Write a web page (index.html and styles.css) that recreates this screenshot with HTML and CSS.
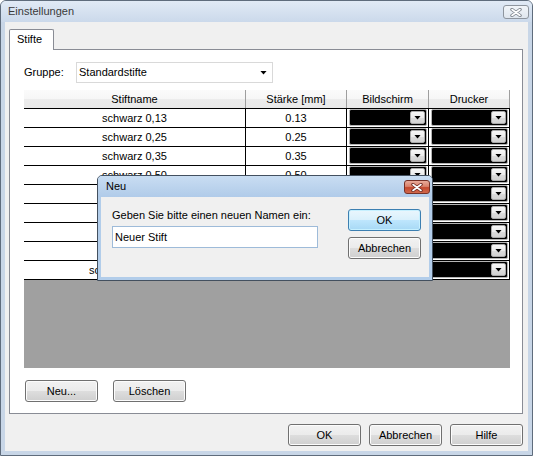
FILE: index.html
```html
<!DOCTYPE html>
<html lang="de">
<head>
<meta charset="utf-8">
<title>Einstellungen</title>
<link rel="stylesheet" href="styles.css">
</head>
<body>
<div class="window">
  <div class="titlebar">
    <span class="title">Einstellungen</span>
    <span class="close close-inactive">
      <svg width="12" height="9" viewBox="0 0 12 9"><path d="M2 1.5l8 6M10 1.5l-8 6" stroke="#7d848d" stroke-width="3.4" stroke-linecap="round"/><path d="M2 1.5l8 6M10 1.5l-8 6" stroke="#fff" stroke-width="1.6" stroke-linecap="round"/></svg>
    </span>
  </div>
  <div class="client">
    <div class="tabs">
      <div class="tabstrip"><div class="tab">Stifte</div></div>
      <div class="panel">
        <div class="group-row">
          <span class="label">Gruppe:</span>
          <div class="combo"><span>Standardstifte</span><span class="tri"></span></div>
        </div>
        <div class="grid">
          <div class="row head">
            <div class="cell c1">Stiftname</div>
            <div class="cell c2">Stärke [mm]</div>
            <div class="cell c3">Bildschirm</div>
            <div class="cell c4">Drucker</div>
          </div>
          <div class="row"><div class="cell c1">schwarz 0,13</div><div class="cell c2">0.13</div><div class="cell c3 cc"><div class="cbox"><span class="dd"></span></div></div><div class="cell c4 cc"><div class="cbox"><span class="dd"></span></div></div></div>
          <div class="row"><div class="cell c1">schwarz 0,25</div><div class="cell c2">0.25</div><div class="cell c3 cc"><div class="cbox"><span class="dd"></span></div></div><div class="cell c4 cc"><div class="cbox"><span class="dd"></span></div></div></div>
          <div class="row"><div class="cell c1">schwarz 0,35</div><div class="cell c2">0.35</div><div class="cell c3 cc"><div class="cbox"><span class="dd"></span></div></div><div class="cell c4 cc"><div class="cbox"><span class="dd"></span></div></div></div>
          <div class="row"><div class="cell c1">schwarz 0,50</div><div class="cell c2">0.50</div><div class="cell c3 cc"><div class="cbox"><span class="dd"></span></div></div><div class="cell c4 cc"><div class="cbox"><span class="dd"></span></div></div></div>
          <div class="row"><div class="cell c1"></div><div class="cell c2"></div><div class="cell c3 cc"><div class="cbox"><span class="dd"></span></div></div><div class="cell c4 cc"><div class="cbox"><span class="dd"></span></div></div></div>
          <div class="row"><div class="cell c1"></div><div class="cell c2"></div><div class="cell c3 cc"><div class="cbox"><span class="dd"></span></div></div><div class="cell c4 cc"><div class="cbox"><span class="dd"></span></div></div></div>
          <div class="row"><div class="cell c1"></div><div class="cell c2"></div><div class="cell c3 cc"><div class="cbox"><span class="dd"></span></div></div><div class="cell c4 cc"><div class="cbox"><span class="dd"></span></div></div></div>
          <div class="row"><div class="cell c1"></div><div class="cell c2"></div><div class="cell c3 cc"><div class="cbox"><span class="dd"></span></div></div><div class="cell c4 cc"><div class="cbox"><span class="dd"></span></div></div></div>
          <div class="row"><div class="cell c1 left9">sc</div><div class="cell c2"></div><div class="cell c3 cc"><div class="cbox"><span class="dd"></span></div></div><div class="cell c4 cc"><div class="cbox"><span class="dd"></span></div></div></div>
        </div>
        <div class="panel-buttons">
          <button class="btn">Neu...</button>
          <button class="btn">Löschen</button>
        </div>
      </div>
    </div>
    <div class="dlg-buttons">
      <button class="btn">OK</button>
      <button class="btn">Abbrechen</button>
      <button class="btn">Hilfe</button>
    </div>
  </div>

  <div class="dialog">
    <div class="dlg-title">
      <span class="title">Neu</span>
      <span class="close close-red">
        <svg width="12" height="9" viewBox="0 0 12 9"><path d="M2 1.5l8 6M10 1.5l-8 6" stroke="#6e2a22" stroke-width="3.4" stroke-linecap="round"/><path d="M2 1.5l8 6M10 1.5l-8 6" stroke="#fff" stroke-width="1.6" stroke-linecap="round"/></svg>
      </span>
    </div>
    <div class="dlg-body">
      <div class="dlg-left">
        <div class="prompt">Geben Sie bitte einen neuen Namen ein:</div>
        <div class="input">Neuer Stift</div>
      </div>
      <div class="dlg-right">
        <button class="btn default">OK</button>
        <button class="btn">Abbrechen</button>
      </div>
    </div>
  </div>
</div>
</body>
</html>
```

FILE: styles.css
```css
* { box-sizing: border-box; }
html, body { margin: 0; padding: 0; }
body {
  width: 533px;
  height: 456px;
  overflow: hidden;
  font: 11px/13px "Liberation Sans", Arial, sans-serif;
  color: #000;
  background: #fff;
}

.window {
  position: relative;
  width: 533px;
  height: 456px;
  border: 1px solid #5f6c7c;
  border-radius: 6px 6px 0 0;
  background: #c8d6e7;
  display: flex;
  flex-direction: column;
}

.titlebar {
  height: 21px;
  flex: none;
  display: flex;
  justify-content: space-between;
  align-items: flex-start;
  padding-left: 7px;
  background: linear-gradient(#e1eaf5, #cbd9eb);
  border-radius: 5px 5px 0 0;
}
.titlebar .title {
  line-height: 21px;
  color: #3a3a3a;
}

.close {
  width: 26px;
  height: 14px;
  margin: 4px 3px 0 0;
  border-radius: 3px;
  display: flex;
  align-items: center;
  justify-content: center;
}
.close-inactive {
  border: 1px solid #8e959e;
  background: linear-gradient(#f1f5f9, #dfe6ee);
}
.close-red {
  margin-right: 2px;
  border: 1px solid #763127;
  background: linear-gradient(#e9ab9a 0%, #d9826c 45%, #c4492f 55%, #d0674b 100%);
}

.client {
  flex: 1;
  margin: 0 4px 4px 4px;
  background: #f0f0f0;
  padding: 7px 5px 5px 4px;
  display: flex;
  flex-direction: column;
}

.tabstrip {
  height: 20px;
  display: flex;
  position: relative;
  z-index: 1;
}
.tab {
  width: 45px;
  height: 21px;
  border: 1px solid #898c95;
  border-bottom: none;
  border-radius: 2px 2px 0 0;
  background: #fff;
  padding: 3px 0 0 7px;
}

.panel {
  height: 365px;
  border: 1px solid #898c95;
  background: #fff;
  padding: 12px 12px 11px 14px;
  display: flex;
  flex-direction: column;
}

.group-row {
  height: 21px;
  display: flex;
  align-items: center;
}
.label { width: 52px; }
.combo {
  width: 197px;
  height: 21px;
  border: 1px solid #d9d9d9;
  display: flex;
  align-items: center;
  justify-content: space-between;
  padding: 0 5px 0 2px;
}
.tri {
  width: 7px;
  height: 4px;
  background: #000;
  clip-path: polygon(0 0, 100% 0, 50% 100%);
}

.grid {
  margin-top: 7px;
  width: 486px;
  height: 278px;
  background: #a0a0a0;
  display: flex;
  flex-direction: column;
}
.row {
  display: flex;
  height: 19px;
  flex: none;
  border-bottom: 1px solid #000;
  background: #fff;
}
.cell {
  border-right: 1px solid #000;
  display: flex;
  align-items: center;
  justify-content: center;
  white-space: nowrap;
  overflow: hidden;
}
.c1 { width: 222px; }
.c2 { width: 101px; }
.c3 { width: 82px; }
.c4 { width: 81px; }
.left9 {
  justify-content: flex-start;
  padding-left: 65px;
}

.head { background: linear-gradient(#fbfbfb 0%, #f6f6f6 50%, #ececec 51%, #e9e9e9 100%); }
.head .cell { border-right-color: #9e9e9e; }

.cc {
  align-items: flex-start;
  justify-content: stretch;
  padding: 0 1px 0 2px;
}
.cbox {
  width: 100%;
  height: 17px;
  border: 1px solid #b4b4b4;
  border-radius: 2px;
  background: #000;
  display: flex;
  justify-content: flex-end;
  padding: 1px;
}
.dd {
  width: 15px;
  border: 1px solid #a9a9a9;
  border-radius: 2px;
  background: linear-gradient(#f7f7f7 0%, #ececec 50%, #dcdcdc 51%, #d2d2d2 100%);
  display: flex;
  align-items: center;
  justify-content: center;
}
.dd::after {
  content: "";
  width: 7px;
  height: 4px;
  background: #000;
  clip-path: polygon(0 0, 100% 0, 50% 100%);
}

.panel-buttons {
  margin-top: 12px;
  padding-left: 1px;
  display: flex;
  gap: 15px;
}

.btn {
  width: 73px;
  height: 22px;
  padding: 0;
  border: 1px solid #707070;
  border-radius: 3px;
  background: linear-gradient(#f2f2f2 0%, #ebebeb 50%, #dddddd 51%, #cfcfcf 100%);
  box-shadow: inset 0 0 0 1px #fcfcfc;
  font: 11px/13px "Liberation Sans", Arial, sans-serif;
  color: #000;
}
.btn.default {
  border-color: #3c7fb1;
  background: linear-gradient(#eaf6fd 0%, #d9f0fc 50%, #bee6fd 51%, #a7d9f5 100%);
  box-shadow: inset 0 0 0 1px #c6f0ff;
}

.dlg-buttons {
  margin-top: 10px;
  display: flex;
  justify-content: flex-end;
  gap: 8px;
}

.dialog {
  position: absolute;
  left: 96px;
  top: 174px;
  width: 336px;
  height: 106px;
  border: 1px solid #43505f;
  border-radius: 5px 5px 0 0;
  background: #b2cdea;
  display: flex;
  flex-direction: column;
  z-index: 5;
}
.dlg-title {
  height: 21px;
  flex: none;
  display: flex;
  justify-content: space-between;
  align-items: flex-start;
  padding-left: 8px;
  background: linear-gradient(#c9ddf2, #b0cbe9);
  border-radius: 4px 4px 0 0;
}
.dlg-title .title {
  line-height: 21px;
  color: #000;
}
.dlg-body {
  flex: 1;
  margin: 0 3px 3px 3px;
  background: #f0f0f0;
  padding: 12px 8px 0 11px;
  display: flex;
  justify-content: space-between;
}
.dlg-left { width: 206px; }
.prompt { height: 13px; white-space: nowrap; }
.input {
  margin-top: 4px;
  height: 22px;
  border: 1px solid #9ebbd9;
  background: #fff;
  padding: 4px 0 0 2px;
}
.dlg-right {
  width: 73px;
  display: flex;
  flex-direction: column;
  gap: 6px;
}
.dlg-right .btn { height: 22px; }
```
